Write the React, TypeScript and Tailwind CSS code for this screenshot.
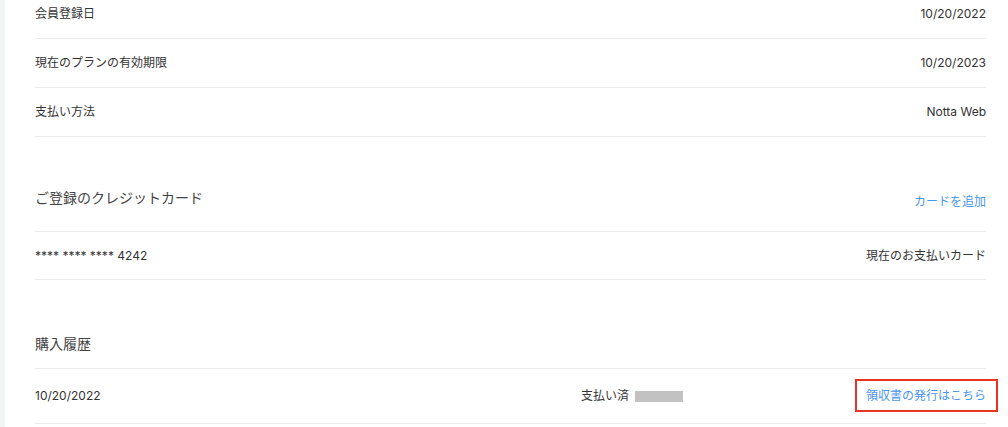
import { type FC, type ReactNode } from 'react';

type RowProps = {
    label: ReactNode;
    value: ReactNode;
};

const InfoRow: FC<RowProps> = ({ label, value }) => (
    <div className="flex items-center justify-between h-[49px] border-b border-[#ebecee] text-[12px] leading-[18px] text-[#333]">
        <span>{label}</span>
        <span>{value}</span>
    </div>
);

export default function App() {
    return (
        <div
            className="w-[1008px] h-[427px] overflow-hidden flex flex-row bg-white"
            style={{ fontFamily: "Inter, 'Noto Sans CJK JP', sans-serif" }}
        >
            <aside className="w-[5px] shrink-0 bg-[#f3f4f6]" />
            <main className="flex-1 pl-[30px] pr-[22px] -mt-[10px]">
                <InfoRow label="会員登録日" value="10/20/2022" />
                <InfoRow label="現在のプランの有効期限" value="10/20/2023" />
                <InfoRow label="支払い方法" value="Notta Web" />

                {/* クレジットカード */}
                <div className="flex items-start justify-between pt-[50px] pb-[20px] border-b border-[#ebecee]">
                    <h2 className="text-[14px] leading-[22px] text-[#444]">ご登録のクレジットカード</h2>
                    <a className="mt-[6px] text-[12px] leading-[18px] text-[#4b95ef] cursor-pointer">
                        カードを追加
                    </a>
                </div>
                <div className="flex items-center justify-between h-[48px] border-b border-[#ebecee] text-[12px] leading-[18px] text-[#333]">
                    <span>**** **** **** 4242</span>
                    <span>現在のお支払いカード</span>
                </div>

                {/* 購入履歴 */}
                <div className="pt-[53px] pb-[13px] border-b border-[#ebecee]">
                    <h2 className="text-[14px] leading-[22px] text-[#444]">購入履歴</h2>
                </div>
                <div className="flex items-center h-[55px] border-b border-[#ebecee] text-[12px] leading-[18px] text-[#333]">
                    <span className="w-[546px] shrink-0">10/20/2022</span>
                    <span className="flex items-center gap-[6px]">
                        支払い済
                        <span className="inline-block w-[48px] h-[11px] bg-[#c2c2c2]" />
                    </span>
                    <span className="relative ml-auto">
                        <a className="text-[#4b95ef] cursor-pointer">領収書の発行はこちら</a>
                        <span className="absolute -left-[11px] -right-[12px] -top-[8px] -bottom-[7px] border-2 border-[#ea3323]" />
                    </span>
                </div>
            </main>
        </div>
    );
}
